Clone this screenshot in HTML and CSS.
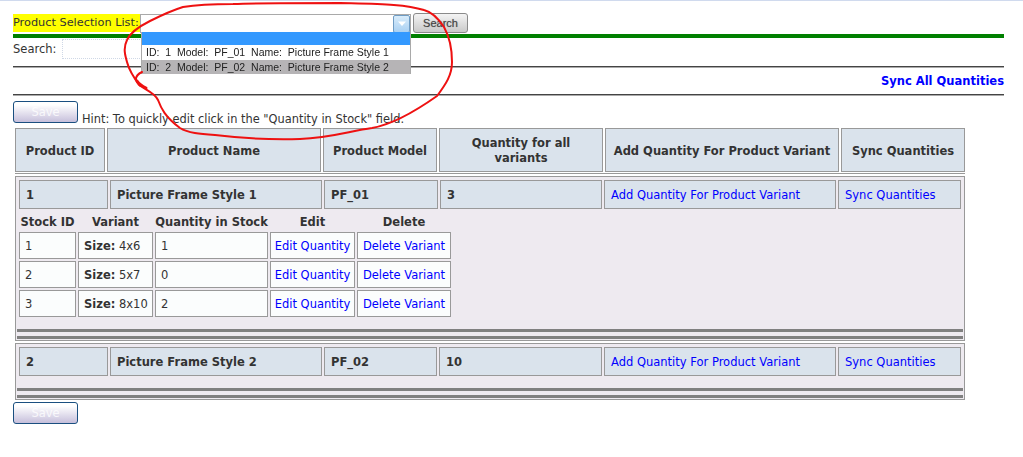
FILE: index.html
```html
<!DOCTYPE html>
<html lang="en">
<head>
  <meta charset="UTF-8" />
  <meta name="viewport" content="width=device-width, initial-scale=1" />
  <title>Product Quantities</title>
  <link rel="stylesheet" href="styles.css">
</head>
<body>
  <form class="page">
    <div class="select-row">
      <span class="select-label">Product Selection List:</span>
      <div class="select-box">
        <span class="select-arrow"><svg width="10" height="6" viewBox="0 0 10 6"><path d="M1 0.5 L5 5 L9 0.5 Z" fill="#fff"/></svg></span>
        <ul class="select-list">
          <li class="is-active">&nbsp;</li>
          <li>ID:  1  Model:  PF_01  Name:  Picture Frame Style 1</li>
          <li class="is-hover">ID:  2  Model:  PF_02  Name:  Picture Frame Style 2</li>
        </ul>
      </div>
      <button type="button" class="search-btn">Search</button>
    </div>
    <div class="green-rule"></div>

    <div class="search-row">
      <label for="search">Search:</label>
      <input type="text" id="search" />
    </div>
    <div class="rule"></div>
    <div class="sync-row"><a href="#">Sync All Quantities</a></div>
    <div class="rule"></div>

    <div class="save-row">
      <button type="button" class="save-btn">Save</button>
      <span class="hint">Hint: To quickly edit click in the "Quantity in Stock" field.</span>
    </div>

    <table class="products">
      <colgroup>
        <col class="c-id"><col class="c-name"><col class="c-model"><col class="c-qty"><col class="c-add"><col class="c-sync">
      </colgroup>
      <thead>
        <tr>
          <th>Product ID</th>
          <th>Product Name</th>
          <th>Product Model</th>
          <th>Quantity for all variants</th>
          <th>Add Quantity For Product Variant</th>
          <th>Sync Quantities</th>
        </tr>
        <tr><td colspan="6" class="head-line"></td></tr>
      </thead>
      <tbody>
        <tr>
          <td colspan="6" class="product-cell">
            <div class="product-box">
              <table class="info">
                <colgroup>
                  <col class="i-id"><col class="i-name"><col class="i-model"><col class="i-qty"><col class="i-add"><col class="i-sync">
                </colgroup>
                <tr>
                  <td><b>1</b></td>
                  <td><b>Picture Frame Style 1</b></td>
                  <td><b>PF_01</b></td>
                  <td><b>3</b></td>
                  <td><a href="#">Add Quantity For Product Variant</a></td>
                  <td><a href="#">Sync Quantities</a></td>
                </tr>
              </table>
              <table class="stock">
                <colgroup>
                  <col class="s-id"><col class="s-variant"><col class="s-qty"><col class="s-edit"><col class="s-del">
                </colgroup>
                <tr>
                  <th>Stock ID</th><th>Variant</th><th>Quantity in Stock</th><th>Edit</th><th>Delete</th>
                </tr>
                <tr>
                  <td>1</td><td><b>Size:</b> 4x6</td><td>1</td>
                  <td class="center"><a href="#">Edit Quantity</a></td>
                  <td class="center"><a href="#">Delete Variant</a></td>
                </tr>
                <tr>
                  <td>2</td><td><b>Size:</b> 5x7</td><td>0</td>
                  <td class="center"><a href="#">Edit Quantity</a></td>
                  <td class="center"><a href="#">Delete Variant</a></td>
                </tr>
                <tr>
                  <td>3</td><td><b>Size:</b> 8x10</td><td>2</td>
                  <td class="center"><a href="#">Edit Quantity</a></td>
                  <td class="center"><a href="#">Delete Variant</a></td>
                </tr>
              </table>
              <div class="thick-rule"></div>
              <div class="thick-rule"></div>
            </div>
          </td>
        </tr>
        <tr>
          <td colspan="6" class="product-cell">
            <div class="product-box">
              <table class="info info-alt">
                <colgroup>
                  <col class="i-id"><col class="i-name"><col class="i-model"><col class="i-qty"><col class="i-add"><col class="i-sync">
                </colgroup>
                <tr>
                  <td><b>2</b></td>
                  <td><b>Picture Frame Style 2</b></td>
                  <td><b>PF_02</b></td>
                  <td><b>10</b></td>
                  <td><a href="#">Add Quantity For Product Variant</a></td>
                  <td><a href="#">Sync Quantities</a></td>
                </tr>
              </table>
              <div class="thick-rule"></div>
              <div class="thick-rule"></div>
            </div>
          </td>
        </tr>
      </tbody>
    </table>

    <button type="button" class="save-btn">Save</button>
  </form>

  <!-- red marker ring drawn over the dropdown -->
  <svg class="marker" width="1023" height="457" viewBox="0 0 1023 457">
    <path d="M142 72 C134 76 135 81 139 85 C146 90 155 93 158 100 C161 108 165 117 180 128 C188 133 200 134 215 135 C240 138 270 140 300 139 C330 138 350 131 372 128 C395 124 420 108 437 96 C446 84 452 75 452 62 C452 48 449 36 444 27 C438 18 432 12 424 10 C405 4 380 4 340 3 C300 3 260 3 233 4 C210 4 195 5 183 7 C170 11 160 16 150 21 C138 27 130 33 127 40 C123 48 125 55 127 62 C129 70 134 78 140 86" />
    <path class="marker-blob" d="M137 81 C139 84 142 86 146 88" />
  </svg>
</body>
</html>
```

FILE: styles.css
```css
* {
  box-sizing: border-box;
}
body {
  margin: 0;
  border-top: 1px solid #d0daee;
  background: #fff;
  color: #333;
  font-family: "DejaVu Sans", Verdana, sans-serif;
  font-size: 11.5px;
}
a {
  color: #00f;
  text-decoration: none;
}
.page {
  padding: 12px 19px 0 13px;
}

/* top row with the select */
.select-row {
  display: flex;
  height: 21px;
}
.select-label {
  width: 127px;
  height: 18px;
  margin-top: 1px;
  background: #ffff00;
  line-height: 18px;
  font-size: 11.3px;
  white-space: nowrap;
}
.select-box {
  position: relative;
  width: 271px;
  height: 19px;
  margin-top: 1px;
  border: 1px solid #a9a9a9;
  border-bottom: 0;
  background: #fff;
}
.select-arrow {
  position: absolute;
  top: 0;
  right: 0;
  width: 17px;
  height: 18px;
  border: 1px solid #6f9cc4;
  border-radius: 2px;
  background: linear-gradient(#d8ecfb, #a9d0f2);
  display: flex;
  align-items: center;
  justify-content: center;
}
.select-list {
  position: absolute;
  top: 17px;
  left: 0;
  width: 270px;
  margin: 0;
  padding: 0;
  list-style: none;
  background: #fff;
  border: 1px solid #a9a9a9;
  border-top: 0;
  border-bottom: 0;
  z-index: 5;
  font-family: "Liberation Sans", Arial, sans-serif;
  font-size: 10.5px;
  color: #222;
}
.select-list li {
  height: 14px;
  padding-left: 4px;
  line-height: 15px;
  white-space: pre;
  filter: blur(0.3px);
}
.select-list li.is-active {
  height: 13px;
  background: #3399ff;
  filter: none;
}
.select-list li:nth-child(2) {
  height: 15px;
}
.select-list li.is-hover {
  background: #b6b4b6;
}
.search-btn {
  width: 55px;
  height: 20px;
  margin-left: 2px;
  padding: 0;
  border: 1px solid #8a8a8a;
  border-radius: 3px;
  background: linear-gradient(#f4f4f4, #c9c9c9);
  color: #444;
  font-family: "Liberation Sans", Arial, sans-serif;
  font-size: 11px;
  text-shadow: 0 0 1px #888;
}
.green-rule {
  height: 4px;
  background: #008000;
}

.search-row {
  display: flex;
  align-items: center;
  gap: 6px;
  height: 28px;
  padding-bottom: 7px;
  padding-top: 1px;
}
.search-row input {
  width: 160px;
  height: 20px;
  border: 1px dotted #cfd8e6;
  background: #fff;
}
.rule {
  height: 2px;
  background: #444;
  border-bottom: 1px solid #aaa;
}
.sync-row {
  height: 26px;
  line-height: 27px;
  text-align: right;
  font-weight: bold;
}

.save-row {
  display: flex;
  align-items: flex-end;
  height: 26px;
  margin-top: 5px;
}
.hint {
  margin-left: 4px;
  line-height: 15px;
  font-size: 11.4px;
}
.save-btn {
  width: 65px;
  height: 22px;
  padding: 0;
  border: 1px solid #1a4f80;
  border-radius: 3px;
  background: linear-gradient(#fff 15%, #c6bfdb);
  color: rgba(255, 255, 255, 0.8);
  font-family: "DejaVu Sans", Verdana, sans-serif;
  font-size: 11.5px;
}
.save-row .save-btn {
  margin-bottom: 4px;
}

/* tables */
table {
  table-layout: fixed;
  border-collapse: separate;
}
.products {
  width: 954px;
  border-spacing: 2px 1px;
}
.c-id { width: 90px; }
.c-name { width: 214px; }
.c-model { width: 114px; }
.c-qty { width: 164px; }
.c-add { width: 234px; }
.c-sync { width: 124px; }

.products > thead th {
  height: 44px;
  padding: 2px 4px 0;
  border: 1px solid #999;
  background: #dae3ec;
  font-size: 11.5px;
  line-height: 15px;
  text-align: center;
}
.head-line {
  height: 2px;
  padding: 0;
  border-top: 1px solid #999;
}
.product-cell {
  padding: 0;
}
.product-box {
  width: 950px;
  margin-bottom: 1px;
  padding: 1px;
  border: 1px solid #999;
  background: #eeeaf0;
}

.info {
  width: 946px;
  border-spacing: 2px;
}
.i-id { width: 89px; }
.i-name { width: 212px; }
.i-model { width: 114px; }
.i-qty { width: 162px; }
.i-add { width: 232px; }
.i-sync { width: 123px; }
.info-alt .i-model { width: 113px; }
.info-alt .i-qty { width: 163px; }
.info td {
  height: 29px;
  padding: 1px 6px 0;
  border: 1px solid #999;
  background: #dae3ec;
  white-space: nowrap;
}

.stock {
  width: 436px;
  border-spacing: 2px;
}
.s-id { width: 57px; }
.s-variant { width: 75px; }
.s-qty { width: 113px; }
.s-edit { width: 85px; }
.s-del { width: 94px; }
.stock th {
  height: 17px;
  padding: 2px 0 0;
  font-size: 11.5px;
  line-height: 15px;
  text-align: center;
  white-space: nowrap;
}
.stock td {
  height: 27px;
  padding: 1px 5px 0;
  border: 1px solid #999;
  background: #fbfdfd;
  white-space: nowrap;
}
.stock td.center {
  padding: 1px 0 0;
  text-align: center;
}
.thick-rule {
  height: 3px;
  margin-top: 4px;
  background: #808080;
}
.info + .thick-rule,
.stock + .thick-rule {
  margin-top: 10px;
}

/* pen marker over the dropdown */
.marker {
  position: absolute;
  top: 0;
  left: 0;
  z-index: 10;
  pointer-events: none;
}
.marker path {
  fill: none;
  stroke: #ee1111;
  stroke-width: 2;
  stroke-linecap: round;
}
.marker .marker-blob {
  stroke-width: 3;
}
```
